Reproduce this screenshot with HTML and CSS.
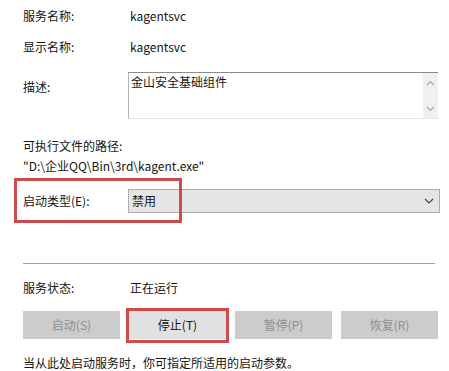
FILE: index.html
```html
<!DOCTYPE html>
<html>
<head>
<meta charset="utf-8">
<link rel="stylesheet" href="styles.css">
</head>
<body>
<div class="page">
  <div class="row r1"><span class="label">服务名称:</span><span class="value">kagentsvc</span></div>
  <div class="row r2"><span class="label">显示名称:</span><span class="value">kagentsvc</span></div>
  <div class="row desc">
    <span class="label desc-label">描述:</span>
    <div class="textarea">
      <div class="ta-text">金山安全基础组件</div>
      <div class="ta-scroll">
        <svg width="9" height="6" viewBox="0 0 9 6"><path d="M1 5 L4.5 1.5 L8 5" fill="none" stroke="#a6a6a6" stroke-width="1.2"/></svg>
        <svg width="9" height="6" viewBox="0 0 9 6"><path d="M1 1 L4.5 4.5 L8 1" fill="none" stroke="#a6a6a6" stroke-width="1.2"/></svg>
      </div>
    </div>
  </div>
  <div class="path-label">可执行文件的路径:</div>
  <div class="path">"D:\企业QQ\Bin\3rd\kagent.exe"</div>
  <div class="row startup">
    <span class="label">启动类型(E):</span>
    <div class="combo">
      <span>禁用</span>
      <svg width="10" height="6" viewBox="0 0 10 6"><path d="M1 1 L5 5 L9 1" fill="none" stroke="#444" stroke-width="1.2"/></svg>
    </div>
    <div class="mark mark-startup"></div>
  </div>
  <div class="sep"></div>
  <div class="row status"><span class="label">服务状态:</span><span class="value">正在运行</span></div>
  <div class="buttons">
    <div class="btn disabled">启动(S)</div>
    <div class="btn active">停止(T)<div class="mark mark-stop"></div></div>
    <div class="btn disabled">暂停(P)</div>
    <div class="btn disabled">恢复(R)</div>
  </div>
  <div class="hint">当从此处启动服务时，你可指定所适用的启动参数。</div>
</div>
</body>
</html>
```
FILE: styles.css
```css
html, body {
  margin: 0;
  padding: 0;
  background: #ffffff;
}
body {
  font-family: "Noto Sans CJK SC", "Microsoft YaHei", sans-serif;
  font-size: 12px;
  line-height: 16px;
  color: #141414;
}
.page {
  padding: 8px 11px 0 23px;
}
.row {
  display: flex;
  align-items: flex-start;
  position: relative;
}
.label {
  width: 105px;
  flex: none;
}
.value {
  padding-left: 2px;
}
.r1 { height: 16px; }
.r2 { margin-top: 15px; height: 16px; }
.desc { margin-top: 17px; }
.desc-label { padding-top: 7px; }
.textarea {
  flex: 1;
  height: 45px;
  border-top: 1px solid #8a8a8a;
  border-left: 1px solid #b4b4b4;
  border-bottom: 1px solid #e6e6e6;
  display: flex;
}
.ta-text {
  flex: 1;
  padding: 1px 0 0 2px;
}
.ta-scroll {
  width: 15px;
  background: #f0f0f0;
  display: flex;
  flex-direction: column;
  align-items: center;
  justify-content: space-between;
  padding: 7px 0 6px;
  box-sizing: border-box;
}
.path-label { margin-top: 19px; }
.path { margin-top: 4px; }
.startup {
  margin-top: 15px;
  align-items: center;
  height: 24px;
}
.combo {
  flex: 1;
  margin-right: -2px;
  height: 22px;
  border: 1px solid #adadad;
  background: #e5e5e5;
  display: flex;
  align-items: center;
  justify-content: space-between;
  padding: 0 5px 0 3px;
}
.mark {
  position: absolute;
  border: 3px solid #cf4a4a;
  box-sizing: border-box;
  pointer-events: none;
}
.mark-startup {
  left: -9px;
  top: -11px;
  width: 168px;
  height: 45px;
}
.sep {
  margin-top: 50px;
  height: 1px;
  background: #a0a0a0;
  margin-right: 3px;
}
.status { margin-top: 16px; height: 16px; }
.buttons {
  margin-top: 15px;
  display: flex;
  justify-content: space-between;
}
.btn {
  width: 97px;
  height: 28px;
  display: flex;
  align-items: center;
  justify-content: center;
  position: relative;
  box-sizing: border-box;
}
.btn.disabled {
  background: #cccccc;
  color: #8f8f8f;
}
.btn.active {
  background: #e1e1e1;
  color: #141414;
}
.mark-stop {
  left: -3px;
  top: -3px;
  right: -3px;
  bottom: -4px;
}
.hint { margin-top: 16px; }
```
